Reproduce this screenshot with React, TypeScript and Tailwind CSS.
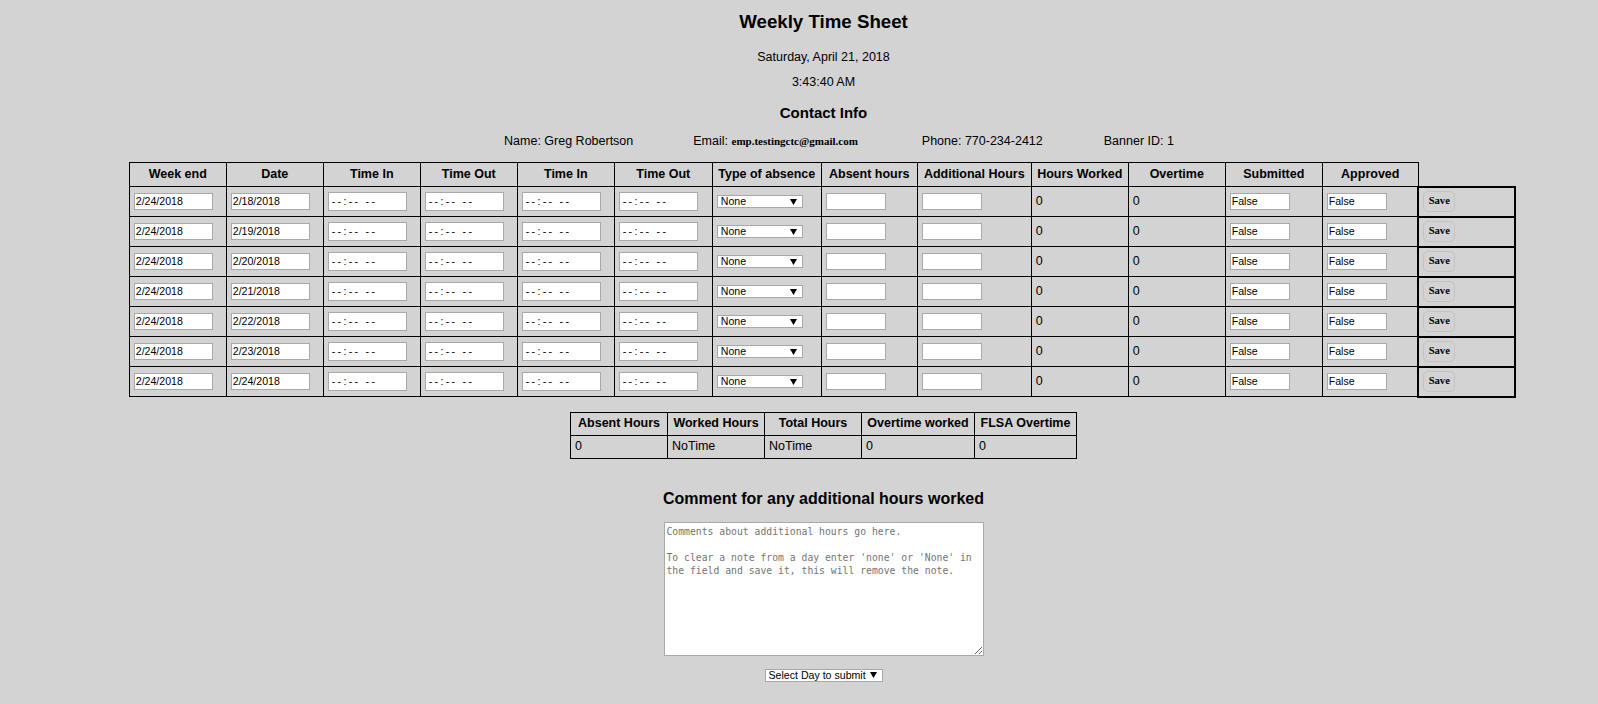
import React from 'react'

const dates = ['2/18/2018', '2/19/2018', '2/20/2018', '2/21/2018', '2/22/2018', '2/23/2018', '2/24/2018']

const headers = [
  'Week end',
  'Date',
  'Time In',
  'Time Out',
  'Time In',
  'Time Out',
  'Type of absence',
  'Absent hours',
  'Additional Hours',
  'Hours Worked',
  'Overtime',
  'Submitted',
  'Approved',
]

const colWidths = [
  'w-[97px]',
  'w-[97px]',
  'w-[97px]',
  'w-[97px]',
  'w-[97px]',
  'w-[98px]',
  'w-[109px]',
  'w-[96px]',
  'w-[114px]',
  'w-[97px]',
  'w-[97px]',
  'w-[97px]',
  'w-[96px]',
  'w-[97px]',
]

function TextBox({ value = '', wide = true }: { value?: string; wide?: boolean }) {
  return (
    <input
      readOnly
      value={value}
      className={
        (wide ? 'w-[79px] ' : 'w-[60px] ') +
        'h-[17px] border border-[#a9a9a9] bg-white px-[1px] text-[10.6px] leading-none text-black outline-none'
      }
    />
  )
}

function TimeBox() {
  return (
    <input
      readOnly
      value="--:-- --"
      className="h-[19px] w-[79px] border border-[#a9a9a9] bg-white px-[3px] text-[10.6px] leading-none tracking-[2.3px] text-black outline-none"
    />
  )
}

function Arrow() {
  return (
    <svg width="7" height="6" viewBox="0 0 7 6" className="shrink-0">
      <polygon points="0,0 7,0 3.5,6" fill="#000" />
    </svg>
  )
}

function Dropdown({ label, className }: { label: string; className: string }) {
  return (
    <div
      className={
        'flex items-center justify-between border border-[#a9a9a9] bg-white text-[10.6px] leading-none text-black ' +
        className
      }
    >
      <span>{label}</span>
      <Arrow />
    </div>
  )
}

const cell = 'border border-black px-[4px] text-left align-middle'
const head = 'border border-black px-[2px] text-center align-middle text-[12.5px] font-bold leading-[15px]'

export default function App() {
  return (
    <div className="min-h-[704px] bg-[#d3d3d3] pl-[49px] font-['Liberation_Sans',Arial,sans-serif] text-[12.5px] text-black">
      <div className="flex flex-col items-center">
        <h1 className="pt-[11px] text-[18.7px] font-bold leading-[21px]">Weekly Time Sheet</h1>
        <p className="mt-[18px] leading-[14px]">Saturday, April 21, 2018</p>
        <p className="mt-[11px] leading-[14px]">3:43:40 AM</p>
        <h2 className="mt-[15px] text-[15px] font-bold leading-[17px]">Contact Info</h2>

        <div className="mt-[13px] flex w-full items-baseline justify-center pl-[31px] leading-[14px]">
          <span>Name: Greg Robertson</span>
          <span className="ml-[60px]">
            Email:{' '}
            <span className="font-['Liberation_Serif',serif] text-[11px] font-bold">emp.testingctc@gmail.com</span>
          </span>
          <span className="ml-[64px]">Phone: 770-234-2412</span>
          <span className="ml-[61px]">Banner ID: 1</span>
        </div>

        <table className="mr-[2px] mt-[14px] w-[1386px] table-fixed border-collapse">
          <colgroup>
            {colWidths.map((w, i) => (
              <col key={i} className={w} />
            ))}
          </colgroup>
          <thead>
            <tr className="h-[24px]">
              {headers.map((h, i) => (
                <th key={i} className={head}>
                  {h}
                </th>
              ))}
            </tr>
          </thead>
          <tbody>
            {dates.map((d) => (
              <tr key={d} className="h-[30px]">
                <td className={cell}>
                  <TextBox value="2/24/2018" />
                </td>
                <td className={cell}>
                  <TextBox value={d} />
                </td>
                <td className={cell}>
                  <TimeBox />
                </td>
                <td className={cell}>
                  <TimeBox />
                </td>
                <td className={cell}>
                  <TimeBox />
                </td>
                <td className={cell}>
                  <TimeBox />
                </td>
                <td className={cell}>
                  <Dropdown label="None" className="h-[13px] w-[86px] pl-[3px] pr-[5px]" />
                </td>
                <td className={cell}>
                  <TextBox wide={false} />
                </td>
                <td className={cell}>
                  <TextBox wide={false} />
                </td>
                <td className={cell}>0</td>
                <td className={cell}>0</td>
                <td className={cell}>
                  <TextBox value="False" wide={false} />
                </td>
                <td className={cell}>
                  <TextBox value="False" wide={false} />
                </td>
                <td className="border-2 border-black px-[4px] text-left align-middle">
                  <button className="h-[21px] w-[32px] rounded-[5px] border border-[#c3c3c3] bg-transparent font-['Liberation_Serif',serif] text-[10.6px] font-bold leading-none">
                    Save
                  </button>
                </td>
              </tr>
            ))}
          </tbody>
        </table>

        <table className="mt-[14px] w-[506px] table-fixed border-collapse">
          <colgroup>
            <col className="w-[97px]" />
            <col className="w-[97px]" />
            <col className="w-[97px]" />
            <col className="w-[113px]" />
            <col className="w-[102px]" />
          </colgroup>
          <thead>
            <tr className="h-[23px]">
              <th className={head}>Absent Hours</th>
              <th className={head}>Worked Hours</th>
              <th className={head}>Total Hours</th>
              <th className={head}>Overtime worked</th>
              <th className={head}>FLSA Overtime</th>
            </tr>
          </thead>
          <tbody>
            <tr className="h-[23px]">
              <td className={cell}>0</td>
              <td className={cell}>NoTime</td>
              <td className={cell}>NoTime</td>
              <td className={cell}>0</td>
              <td className={cell}>0</td>
            </tr>
          </tbody>
        </table>

        <h2 className="mt-[31px] text-[16px] font-bold leading-[18px]">Comment for any additional hours worked</h2>

        <textarea
          className="mt-[14px] h-[134px] w-[320px] border border-[#a9a9a9] bg-white p-[2px] font-['DejaVu_Sans_Mono','Liberation_Mono',monospace] text-[9.75px] leading-[13px] text-black outline-none placeholder:text-[#757575]"
          placeholder={
            "Comments about additional hours go here.\n\nTo clear a note from a day enter 'none' or 'None' in\nthe field and save it, this will remove the note."
          }
        />

        <Dropdown label="Select Day to submit" className="mt-[13px] h-[13px] w-[118px] pl-[3px] pr-[5px]" />
      </div>
    </div>
  )
}
